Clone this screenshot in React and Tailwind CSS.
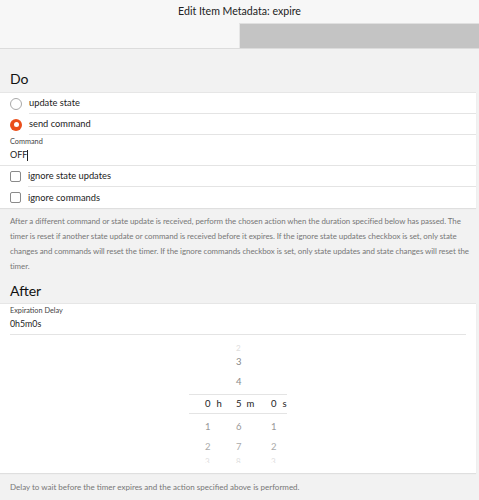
import React from "react";

const font = { fontFamily: 'Lato, "Open Sans", sans-serif' };

const Radio = ({ checked }) =>
  checked ? (
    <span className="w-[12px] h-[12px] rounded-full bg-[#ea4e1a] flex items-center justify-center shrink-0">
      <span className="w-[5px] h-[5px] rounded-full bg-white" />
    </span>
  ) : (
    <span className="w-[12px] h-[12px] rounded-full border border-[#a8a8a8] bg-white shrink-0" />
  );

const Check = () => (
  <span className="w-[11px] h-[11px] rounded-[2px] border border-[#8a8a8a] bg-white shrink-0" />
);

const Row = ({ icon, label, last }) => (
  <div className="flex items-center h-[21px] pl-[10px]">
    {icon}
    <div
      className={
        "flex-1 ml-[7px] h-full flex items-center text-[9.3px] text-[#222] " +
        (last ? "" : "border-b border-[#e4e4e4]")
      }
    >
      {label}
    </div>
  </div>
);

const Picker = () => (
  <div className="flex flex-col items-center pt-[7px] text-[9.5px]">
    <div className="h-[10px] w-[98px] overflow-hidden flex">
      <span className="w-[31px]" />
      <span className="pl-[16px] text-[#ddd] text-[8px] leading-[6px] translate-y-[3px]">2</span>
    </div>
    <div className="flex flex-col w-[98px]">
      <div className="flex h-[20px] items-center text-[#888]">
        <span className="w-[31px]" />
        <span className="w-[35px] pl-[16px]">3</span>
      </div>
      <div className="flex h-[20px] items-center text-[#888]">
        <span className="w-[31px]" />
        <span className="w-[35px] pl-[16px]">4</span>
      </div>
      <div className="h-[2px]" />
      <div className="flex h-[20px] items-center border-y border-[#e4e4e4] text-[#222]">
        <span className="w-[31px] pl-[16px]">0<span className="ml-[6px]">h</span></span>
        <span className="w-[35px] pl-[16px]">5<span className="ml-[5px]">m</span></span>
        <span className="w-[32px] pl-[16px]">0<span className="ml-[6px]">s</span></span>
      </div>
      <div className="h-[3px]" />
      <div className="flex h-[20px] items-center text-[#999]">
        <span className="w-[31px] pl-[16px]">1</span>
        <span className="w-[35px] pl-[16px]">6</span>
        <span className="w-[32px] pl-[16px]">1</span>
      </div>
      <div className="flex h-[20px] items-center text-[#aaa]">
        <span className="w-[31px] pl-[16px]">2</span>
        <span className="w-[35px] pl-[16px]">7</span>
        <span className="w-[32px] pl-[16px]">2</span>
      </div>
      <div className="flex h-[6px] overflow-hidden items-start text-[#ddd] text-[8px] leading-[9px]">
        <span className="w-[31px] pl-[16px]">3</span>
        <span className="w-[35px] pl-[16px]">8</span>
        <span className="w-[32px] pl-[16px]">3</span>
      </div>
    </div>
  </div>
);

export default function App() {
  return (
    <div className="w-[479px] h-[500px] bg-[#f2f2f2] overflow-hidden" style={font}>
      <div className="h-[49px] bg-[#f7f7f7] border-b border-[#dcdcdc] flex flex-col">
        <div className="h-[23px] flex items-center justify-center text-[10.6px] text-[#222]">
          Edit Item Metadata: expire
        </div>
        <div className="flex-1 flex">
          <div className="w-[239px]" />
          <div className="flex-1 bg-[#c4c4c4] border-l border-[#e6e6e6] border-t border-t-[#e0e0e0]" />
        </div>
      </div>

      <div className="pt-[20px] pl-[10px] h-[43px] text-[14px] text-[#111] leading-[20px]">Do</div>
      <div className="bg-white mr-[3px] border-t border-[#e6e6e6] shadow-[0_1px_1px_rgba(0,0,0,0.08)]">
        <Row icon={<Radio />} label="update state" />
        <Row icon={<Radio checked />} label="send command" />
        <div className="pl-[10px] h-[31px] border-b border-[#e4e4e4] flex flex-col justify-center">
          <div className="text-[7.3px] text-[#444] leading-[10px]">Command</div>
          <div className="text-[9px] text-[#222] leading-[16px] flex items-center">
            OFF<span className="w-px h-[11px] bg-[#222]" />
          </div>
        </div>
        <Row icon={<Check />} label="ignore state updates" />
        <Row icon={<Check />} label="ignore commands" last />
      </div>

      <p className="px-[10px] pt-[6px] text-[7.9px] tracking-[-0.05px] leading-[15px] text-[#777]">
        After a different command or state update is received, perform the chosen action when the duration specified below has passed. The timer is reset if another state update or command is received before it expires. If the ignore state updates checkbox is set, only state changes and commands will reset the timer. If the ignore commands checkbox is set, only state updates and state changes will reset the timer.
      </p>

      <div className="pt-[7px] pl-[10px] h-[29px] text-[14px] text-[#111] leading-[20px]">After</div>
      <div className="bg-white mr-[3px] border-t border-[#e6e6e6] h-[170px] shadow-[0_1px_1px_rgba(0,0,0,0.08)]">
        <div className="mx-[10px] pt-[2px] h-[31px] border-b border-[#e4e4e4]">
          <div className="text-[7.3px] text-[#444] leading-[10px]">Expiration Delay</div>
          <div className="text-[8.8px] text-[#222] leading-[15px]">0h5m0s</div>
        </div>
        <Picker />
      </div>
      <div className="pl-[10px] pt-[8px] text-[8px] text-[#777]">
        Delay to wait before the timer expires and the action specified above is performed.
      </div>
    </div>
  );
}
